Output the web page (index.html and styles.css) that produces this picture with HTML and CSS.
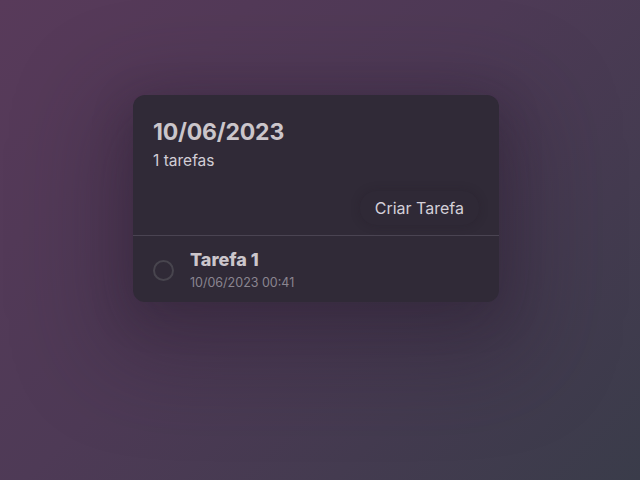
FILE: index.html
```html
<!DOCTYPE html>
<html lang="pt">
<head>
<meta charset="utf-8">
<link rel="stylesheet" href="styles.css">
</head>
<body>
<main class="page">
  <section class="card">
    <header class="card-head">
      <h1 class="date">10/06/2023</h1>
      <p class="count">1 tarefas</p>
      <div class="actions"><button class="create">Criar Tarefa</button></div>
    </header>
    <ul class="tasks">
      <li class="task">
        <span class="check"></span>
        <div class="task-text">
          <span class="task-title">Tarefa 1</span>
          <span class="task-time">10/06/2023 00:41</span>
        </div>
      </li>
    </ul>
  </section>
</main>
</body>
</html>
```

FILE: styles.css
```css
html, body {
  margin: 0;
  height: 100%;
}
body {
  background: linear-gradient(135deg, #583a5a 0%, #4e3a56 45%, #3a3c4a 100%);
  font-family: "Inter", "Lato", sans-serif;
  overflow: hidden;
}
.page {
  height: 100%;
  display: flex;
  justify-content: center;
  align-items: flex-start;
  padding-top: 95px;
  box-sizing: border-box;
  padding-right: 8px;
}
.card {
  width: 366px;
  background: #302a37;
  border-radius: 12px;
  box-shadow: 0 30px 90px 30px rgba(40, 30, 45, 0.35), 0 10px 40px rgba(40, 30, 45, 0.3);
  overflow: hidden;
}
.card-head {
  padding: 22px 20px 10px 20px;
  border-bottom: 1px solid #4a4452;
}
.date {
  margin: 0;
  font-size: 23px;
  line-height: 30px;
  font-weight: 700;
  color: #cbc6cb;
  letter-spacing: -0.2px;
}
.count {
  margin: 4px 0 0 0;
  font-size: 15.5px;
  line-height: 20px;
  color: #d2ced6;
}
.actions {
  display: flex;
  justify-content: flex-end;
  margin-top: 20px;
}
.create {
  font: inherit;
  font-size: 16px;
  color: #d4d0d8;
  background: #2f2936;
  border: none;
  border-radius: 16px;
  padding: 7px 15px;
  box-shadow: 0 0 10px rgba(30, 25, 35, 0.25);
}
.tasks {
  list-style: none;
  margin: 0;
  padding: 0;
}
.task {
  display: flex;
  align-items: center;
  gap: 16px;
  padding: 13px 20px 10px 20px;
}
.check {
  width: 17px;
  height: 17px;
  border: 2px solid #48454e;
  border-radius: 50%;
  flex: none;
  margin-top: 0;
}
.task-text {
  display: flex;
  flex-direction: column;
}
.task-title {
  font-size: 18px;
  line-height: 22px;
  font-weight: 800;
  color: #cbc6cb;
}
.task-time {
  margin-top: 3px;
  font-size: 12.5px;
  line-height: 18px;
  color: #8a8590;
}
```
